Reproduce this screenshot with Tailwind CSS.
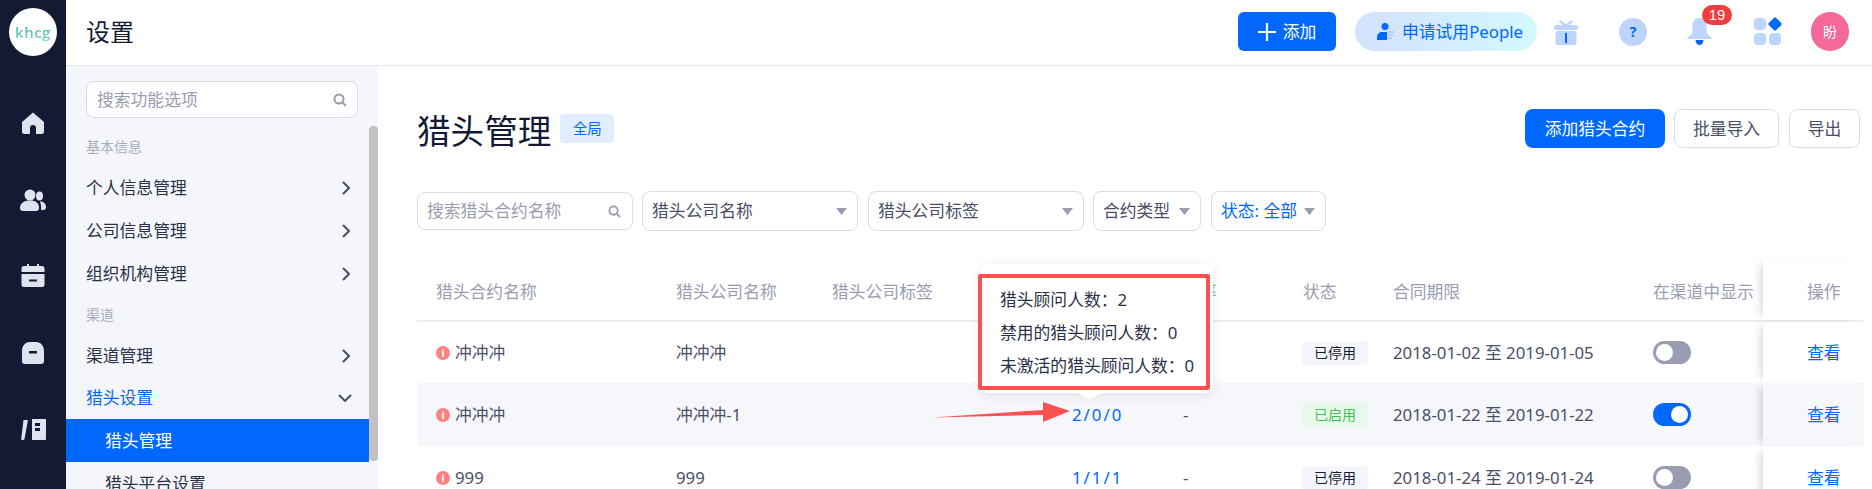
<!DOCTYPE html>
<html lang="zh-CN">
<head>
<meta charset="UTF-8" />
<title>猎头管理</title>
<script src="https://cdn.jsdelivr.net/npm/@tailwindcss/browser@4"></script>
</head>
<body class="h-screen overflow-hidden bg-white font-['Noto_Sans','Noto_Sans_CJK_SC',sans-serif] text-[16.8px] text-[#4b4e68]">
<div class="flex h-[489px] w-[1872px]">

  <!-- icon rail -->
  <aside class="w-[66px] shrink-0 bg-[#141a34] flex flex-col items-center pt-2">
    <div class="w-12 h-12 rounded-full bg-white flex items-center justify-center">
      <span class="font-['Open_Sans',sans-serif] text-[15px] font-semibold tracking-[0.5px] bg-gradient-to-b from-[#2fae9c] to-[#7fd8c8] bg-clip-text text-transparent">khcg</span>
    </div>
    <div class="mt-[28px] flex flex-col">
      <div class="h-[77px] flex items-center justify-center">
        <svg class="w-6 h-6" viewBox="0 0 24 24" fill="#dfe3ee"><path d="M12 1.500 1 11v9.500A2.500 2.500 0 0 0 3.500 23H9v-6a3 3 0 0 1 6 0v6h5.500A2.500 2.500 0 0 0 23 20.500V11z"/></svg>
      </div>
      <div class="h-[77px] flex items-center justify-center">
        <svg class="w-[26px] h-[22px]" viewBox="0 0 26 22" fill="#dfe3ee"><circle cx="10" cy="6" r="5.500"/><path d="M0 19c0-5 4-7.500 10-7.500S19 14 19 19c0 2-1 3-3 3H3c-2 0-3-1-3-3z"/><ellipse cx="19.500" cy="7" rx="3.500" ry="4.500"/><path d="M20 12.500c3.500 0 6 2 6 5.500 0 2-1 3-2.500 3H21c.5-3-.2-6-1-8.500z"/></svg>
      </div>
      <div class="h-[76px] flex items-center justify-center">
        <svg class="w-6 h-6" viewBox="0 0 24 24" fill="#dfe3ee"><path d="M6 0h2v2h8V0h2v2h3a2.500 2.500 0 0 1 2.500 2.500V8H.5V4.500A2.500 2.500 0 0 1 3 2h3z"/><path fill-rule="evenodd" d="M.5 10h23v10.500A2.500 2.500 0 0 1 21 23H3a2.500 2.500 0 0 1-2.500-2.500zM8 15.500v2h8v-2z"/></svg>
      </div>
      <div class="h-[77px] flex items-center justify-center">
        <svg class="w-[22px] h-[22px]" viewBox="0 0 22 22" fill="#dfe3ee"><path fill-rule="evenodd" d="M8 0h6c5 0 8 4 8 9v10a3 3 0 0 1-3 3H3a3 3 0 0 1-3-3V9c0-5 3-9 8-9zM7 9v2.500h8V9z"/></svg>
      </div>
      <div class="h-[77px] flex items-center justify-center">
        <svg class="w-[25px] h-[21px]" viewBox="0 0 25 21" fill="#dfe3ee"><path d="M2.500 1h3.500c.7 0 1 .5.8 1L3.500 20c-.2.700-.7 1-1.500 1H1c-.7 0-1-.5-.8-1.200z"/><path fill-rule="evenodd" d="M11 0h13a1 1 0 0 1 1 1v19a1 1 0 0 1-1 1H11zM14 4v3h5V4zM14 9v3h5V9z"/></svg>
      </div>
    </div>
  </aside>

  <div class="flex-1 min-w-0 flex flex-col">
    <!-- top bar -->
    <header class="h-[66px] shrink-0 border-b border-[#e6e8f0] flex items-center pl-[20px] pb-[2px] bg-white">
      <h1 class="text-[24px] leading-none text-[#141a34]">设置</h1>
      <div class="ml-auto flex items-center h-[39px]">
        <button class="w-[98px] h-[39px] rounded-md bg-[#0068ff] text-white flex items-center justify-center gap-[7px]">
          <svg class="w-[18px] h-[18px]" viewBox="0 0 18 18" fill="none" stroke="#fff" stroke-width="2.200"><path d="M9 0v18M0 9h18"/></svg>
          <span>添加</span>
        </button>
        <div class="ml-[19px] w-[182px] h-[39px] rounded-full bg-gradient-to-r from-[#d3e2fd] to-[#d3f8ff] flex items-center pl-[22px] gap-[7px] text-[#0068ff]">
          <svg class="w-[18px] h-[17px]" viewBox="0 0 18 17"><ellipse cx="8" cy="3.500" rx="3.500" ry="3.500" fill="#0068ff"/><path d="M0 17v-3c0-3 2.500-5 5-5h5v8z" fill="#0068ff"/><path d="M11 9h6M11 12h5M10 15h5" stroke="#a6c6fb" stroke-width="1.300"/></svg>
          <span class="whitespace-nowrap">申请试用People</span>
        </div>
        <div class="ml-[17px] w-[24px] flex justify-center">
          <svg class="w-[24px] h-[26px]" viewBox="0 0 24 26" fill="#bdd4fd"><path d="M6 1l6 4 6-4 1.200 1.500L14 7h-4L4.800 2.500z"/><rect x="0" y="6" width="24" height="5" rx="2.500"/><rect x="1.500" y="12" width="21" height="14" rx="2"/><rect x="11" y="14" width="2" height="10" fill="#0068ff"/></svg>
        </div>
        <div class="ml-[41px] w-[28px] h-[28px] rounded-full bg-[#bdd4fd] flex items-center justify-center text-[#0068ff] text-[14px] font-bold leading-none">?</div>
        <div class="relative ml-[40px] w-[25px] h-[27px]">
          <svg class="w-[25px] h-[27px]" viewBox="0 0 25 27"><path d="M12.500 0c4.500 0 7 3.500 7 8v6c0 2 2.500 3.500 5 5.500 .5 .7 .2 1.500-.7 1.500H1.200c-.9 0-1.200-.8-.7-1.500 2.500-2 5-3.500 5-5.500V8c0-4.500 2.500-8 7-8z" fill="#bdd4fd"/><path d="M8.500 22h8c0 3-2 5-4 5s-4-2-4-5z" fill="#0068ff"/></svg>
          <span class="absolute -top-[13px] left-[15px] w-[30px] h-[20px] rounded-full bg-[#f03e3e] text-white text-[15px] leading-[20px] text-center font-['Liberation_Sans',sans-serif]">19</span>
        </div>
        <div class="ml-[42px] w-[27px] h-[27px] grid grid-cols-2 gap-[3px]">
          <span class="rounded-[4px] bg-[#bdd4fd]"></span>
          <span class="rounded-[2px] bg-[#0068ff] rotate-45 scale-[.86]"></span>
          <span class="rounded-[4px] bg-[#bdd4fd]"></span>
          <span class="rounded-[4px] bg-[#bdd4fd]"></span>
        </div>
        <div class="ml-[30px] mr-[23px] w-[38px] h-[39px] rounded-full bg-[#f2699a] text-white text-[14px] flex items-center justify-center">盼</div>
      </div>
    </header>

    <div class="relative flex-1 min-h-0 flex overflow-hidden">
      <!-- settings menu -->
      <nav class="relative w-[312px] shrink-0 bg-[#f4f6fb] overflow-hidden">
        <div class="absolute right-0 top-[60px] w-[9px] h-[335px] rounded-[4px] bg-[#c1c1c5]"></div>
        <div class="ml-[20px] mt-[15px] w-[272px] h-[37px] rounded-[8px] border border-[#dadbe8] bg-white flex items-center pl-[10px] pr-[10px] text-[#9a9db1]">
          <span>搜索功能选项</span>
          <svg class="ml-auto w-[14px] h-[14px]" viewBox="0 0 14 14" fill="none" stroke="#9a9db1" stroke-width="2"><circle cx="6" cy="6" r="4.500"/><path d="M9.500 9.500 13 13"/></svg>
        </div>
        <div class="mt-[9px] w-[303px]">
          <div class="h-[39px] pl-[20px] flex items-center text-[14px] text-[#a8abbd]">基本信息</div>
          <div class="h-[43px] pl-[20px] pr-[19px] flex items-center justify-between text-[#2c3048]"><span>个人信息管理</span><svg class="w-[8px] h-[14px]" viewBox="0 0 8 14" fill="none" stroke="#4b4e68" stroke-width="2"><path d="M1 1l6 6-6 6"/></svg></div>
          <div class="h-[43px] pl-[20px] pr-[19px] flex items-center justify-between text-[#2c3048]"><span>公司信息管理</span><svg class="w-[8px] h-[14px]" viewBox="0 0 8 14" fill="none" stroke="#4b4e68" stroke-width="2"><path d="M1 1l6 6-6 6"/></svg></div>
          <div class="h-[43px] pl-[20px] pr-[19px] flex items-center justify-between text-[#2c3048]"><span>组织机构管理</span><svg class="w-[8px] h-[14px]" viewBox="0 0 8 14" fill="none" stroke="#4b4e68" stroke-width="2"><path d="M1 1l6 6-6 6"/></svg></div>
          <div class="h-[39px] pl-[20px] flex items-center text-[14px] text-[#a8abbd]">渠道</div>
          <div class="h-[43px] pl-[20px] pr-[19px] flex items-center justify-between text-[#2c3048]"><span>渠道管理</span><svg class="w-[8px] h-[14px]" viewBox="0 0 8 14" fill="none" stroke="#4b4e68" stroke-width="2"><path d="M1 1l6 6-6 6"/></svg></div>
          <div class="h-[42px] pl-[20px] pr-[17px] flex items-center justify-between text-[#0068ff]"><span>猎头设置</span><svg class="w-[14px] h-[8px]" viewBox="0 0 14 8" fill="none" stroke="#4b4e68" stroke-width="2"><path d="M1 1l6 6 6-6"/></svg></div>
          <div class="h-[43px] pl-[39px] flex items-center bg-[#0068ff] text-white">猎头管理</div>
          <div class="h-[43px] pl-[39px] flex items-center text-[#2c3048]">猎头平台设置</div>
        </div>
      </nav>

      <!-- main -->
      <main class="flex-1 min-w-0 pl-[39px] pr-[9px] pt-[43px]">
        <div class="flex items-start justify-between h-[39px]">
          <div class="flex items-start">
            <h2 class="text-[33.600px] leading-[38px] mt-[3px] text-[#141a34] whitespace-nowrap">猎头管理</h2>
            <span class="ml-[9px] mt-[5px] w-[54px] h-[29px] rounded-[4px] bg-[#e1ecfe] text-[#0068ff] text-[14.400px] flex items-center justify-center">全局</span>
          </div>
          <div class="flex mr-[3px]">
            <button class="w-[140px] h-[39px] rounded-lg bg-[#0068ff] text-white">添加猎头合约</button>
            <button class="ml-[9px] w-[105px] h-[39px] rounded-lg border border-[#dadbe8] bg-white">批量导入</button>
            <button class="ml-[10px] w-[71px] h-[39px] rounded-lg border border-[#dadbe8] bg-white">导出</button>
          </div>
        </div>

        <div class="mt-[43px] flex items-center h-[40px]">
          <div class="w-[216px] h-[38px] rounded-lg border border-[#dadbe8] flex items-center pl-[9px] pr-[11px] text-[#9a9db1]">
            <span>搜索猎头合约名称</span>
            <svg class="ml-auto w-[13px] h-[13px]" viewBox="0 0 14 14" fill="none" stroke="#9a9db1" stroke-width="2"><circle cx="6" cy="6" r="4.500"/><path d="M9.500 9.500 13 13"/></svg>
          </div>
          <div class="ml-[9px] w-[216px] h-[40px] rounded-lg border border-[#dadbe8] flex items-center justify-between pl-[9px] pr-[10px]"><span>猎头公司名称</span><svg class="w-[11px] h-[7px]" viewBox="0 0 11 7" fill="#9a9db1"><path d="M0 0h11L5.500 7z"/></svg></div>
          <div class="ml-[10px] w-[216px] h-[40px] rounded-lg border border-[#dadbe8] flex items-center justify-between pl-[9px] pr-[10px]"><span>猎头公司标签</span><svg class="w-[11px] h-[7px]" viewBox="0 0 11 7" fill="#9a9db1"><path d="M0 0h11L5.500 7z"/></svg></div>
          <div class="ml-[9px] w-[108px] h-[40px] rounded-lg border border-[#dadbe8] flex items-center justify-between pl-[9px] pr-[10px]"><span>合约类型</span><svg class="w-[11px] h-[7px]" viewBox="0 0 11 7" fill="#9a9db1"><path d="M0 0h11L5.500 7z"/></svg></div>
          <div class="ml-[10px] w-[115px] h-[40px] rounded-lg border border-[#dadbe8] flex items-center justify-between pl-[9px] pr-[10px] text-[#0068ff]"><span>状态: 全部</span><svg class="w-[11px] h-[7px]" viewBox="0 0 11 7" fill="#9a9db1"><path d="M0 0h11L5.500 7z"/></svg></div>
        </div>

        <!-- table -->
        <div class="mt-[29px]">
          <div class="h-[62px] border-b-2 border-[#eaebf3] pl-[19px] grid grid-cols-[240px_156px_240px_111px_120px_90px_260px_110px_101px] items-center text-[#9a9db1]">
            <span class="pt-[3px]">猎头合约名称</span>
            <span class="pt-[3px]">猎头公司名称</span>
            <span class="pt-[3px]">猎头公司标签</span>
            <span class="pt-[3px]">猎头顾问</span>
            <span class="pt-[3px]">效率</span>
            <span class="pt-[3px]">状态</span>
            <span class="pt-[3px]">合同期限</span>
            <span class="pt-[3px] whitespace-nowrap">在渠道中显示</span>
            <span class="self-stretch pl-[44px] pt-[3px] flex items-center bg-white shadow-[-7px_0_8px_-5px_rgba(20,26,52,0.18)]">操作</span>
          </div>
          <div class="h-[61px] pl-[19px] grid grid-cols-[240px_156px_240px_111px_120px_90px_260px_110px_101px] items-center">
            <span class="flex items-center gap-[5px]"><span class="w-[14px] h-[14px] rounded-full bg-[#ff8080] text-white text-[10px] leading-none font-bold flex items-center justify-center">i</span>冲冲冲</span>
            <span>冲冲冲</span>
            <span></span>
            <span></span>
            <span></span>
            <span class="w-[66px] h-[24px] -ml-[1px] rounded-[4px] bg-[#f4f6fb] text-[#141a34] text-[14px] flex items-center justify-center">已停用</span>
            <span>2018-01-02 至 2019-01-05</span>
            <span class="w-[38px] h-[23px] rounded-full bg-[#9a9db1] flex items-center pl-[3px]"><span class="w-[17px] h-[17px] rounded-full bg-white"></span></span>
            <span class="self-stretch pl-[44px] flex items-center bg-white text-[#0068ff] shadow-[-7px_0_8px_-5px_rgba(20,26,52,0.18)]">查看</span>
          </div>
          <div class="h-[63px] pl-[19px] grid grid-cols-[240px_156px_240px_111px_120px_90px_260px_110px_101px] items-center bg-[#f6f7fa]">
            <span class="flex items-center gap-[5px]"><span class="w-[14px] h-[14px] rounded-full bg-[#ff8080] text-white text-[10px] leading-none font-bold flex items-center justify-center">i</span>冲冲冲</span>
            <span>冲冲冲-1</span>
            <span></span>
            <span class="text-[#0068ff] tracking-[2px]">2/0/0</span>
            <span>-</span>
            <span class="w-[66px] h-[24px] -ml-[1px] rounded-[4px] bg-[#e8f8ea] text-[#45c15a] text-[14px] flex items-center justify-center">已启用</span>
            <span>2018-01-22 至 2019-01-22</span>
            <span class="w-[38px] h-[23px] rounded-full bg-[#0068ff] flex items-center justify-end pr-[3px]"><span class="w-[17px] h-[17px] rounded-full bg-white"></span></span>
            <span class="self-stretch pl-[44px] flex items-center bg-[#f6f7fa] text-[#0068ff] shadow-[-7px_0_8px_-5px_rgba(20,26,52,0.22)]">查看</span>
          </div>
          <div class="h-[63px] pl-[19px] grid grid-cols-[240px_156px_240px_111px_120px_90px_260px_110px_101px] items-center">
            <span class="flex items-center gap-[5px]"><span class="w-[14px] h-[14px] rounded-full bg-[#ff8080] text-white text-[10px] leading-none font-bold flex items-center justify-center">i</span>999</span>
            <span>999</span>
            <span></span>
            <span class="text-[#0068ff] tracking-[2px]">1/1/1</span>
            <span>-</span>
            <span class="w-[66px] h-[24px] -ml-[1px] rounded-[4px] bg-[#f4f6fb] text-[#141a34] text-[14px] flex items-center justify-center">已停用</span>
            <span>2018-01-24 至 2019-01-24</span>
            <span class="w-[38px] h-[23px] rounded-full bg-[#9a9db1] flex items-center pl-[3px]"><span class="w-[17px] h-[17px] rounded-full bg-white"></span></span>
            <span class="self-stretch pl-[44px] flex items-center bg-white text-[#0068ff] shadow-[-7px_0_8px_-5px_rgba(20,26,52,0.18)]">查看</span>
          </div>
        </div>
      </main>

      <!-- tooltip with the annotation drawn on the screenshot -->
      <div class="absolute left-[915px] top-[198px] w-[232px] h-[129px] rounded-lg bg-white shadow-[0_2px_12px_rgba(20,26,52,0.1)] z-10">
        <div class="absolute left-[98px] -bottom-[7px] w-0 h-0 border-x-[11px] border-x-transparent border-t-[7px] border-t-white"></div>
        <div class="absolute -left-[3px] top-[10px] w-[232px] h-[116px] rounded-[2px] border-4 border-[#fd5050] pl-[18px] pt-[5px] text-[#2c3048] leading-[33px] whitespace-nowrap">
          <div>猎头顾问人数：2</div>
          <div>禁用的猎头顾问人数：0</div>
          <div>未激活的猎头顾问人数：0</div>
        </div>
      </div>
      <svg class="absolute left-[866px] top-[336px] w-[140px] h-[24px] z-10" viewBox="0 0 140 24" fill="#fd5050"><path d="M0 15.500 111 8 111 0 138 9 111 20 111 13z"/></svg>

      <div id="watermark" class="absolute left-[31px] top-[39px] w-[1715px] grid grid-cols-[repeat(7,245px)] auto-rows-[120px] pointer-events-none z-20"></div>
    </div>
  </div>
</div>
<script>
  // faint user watermark repeated over the body area
  const wm = document.getElementById("watermark");
  for (let i = 0; i < 21; i++) {
    wm.innerHTML += `<div class="flex flex-col items-center justify-center -rotate-[28deg] whitespace-nowrap text-[#141a34]/[0.025] leading-[26px]"><span>盼盼 2025-08-19 16:12</span><span>lipanpan</span></div>`;
  }
</script>
</body>
</html>
